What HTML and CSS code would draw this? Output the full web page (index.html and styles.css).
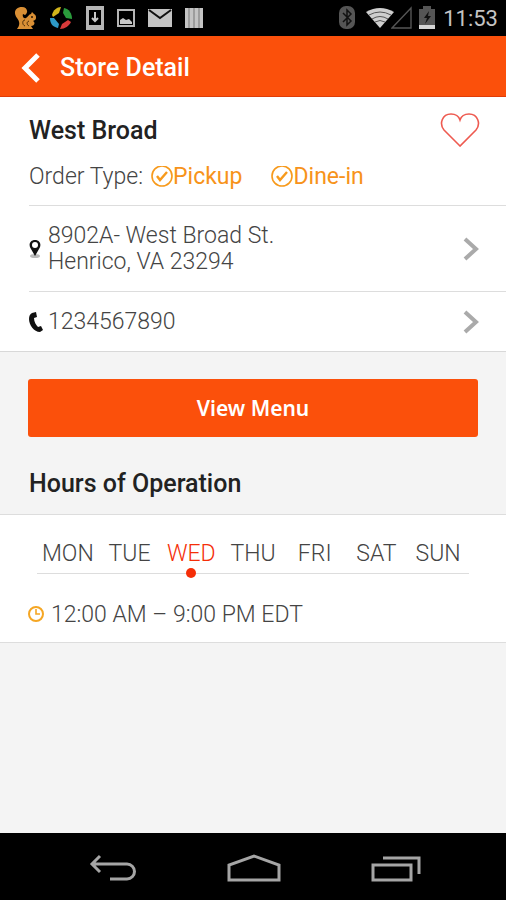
FILE: index.html
```html
<!DOCTYPE html>
<html lang="en">
<head>
    <meta charset="UTF-8">
    <meta name="viewport" content="width=device-width, initial-scale=1.0">
    <title>Store Detail</title>
    <link rel="stylesheet" href="styles.css">
</head>
<body>
    <div class="status-bar">
        <div class="status-left">
            <svg width="22" height="24" viewBox="0 0 22 24">
                <path d="M3 23C6 19 6 16 3 12C-1 7 1 1 8 1C13 1 15 6 11 9L9 8C8 11 10 13 12 12C14 11 15 8 17 8L18 6L20 8C22 9 23 12 21 14L19 15C22 17 20 20 17 20L19 23Z" fill="#d98f35"/>
                <path d="M11 14C8 14 8 19 11 20M15 15C12 16 13 19 15 20" fill="none" stroke="#4a2a08" stroke-width="1"/>
                <circle cx="18" cy="11" r="1" fill="#2a1705"/>
            </svg>
            <svg width="24" height="24" viewBox="0 0 24 24">
                <path d="M3 9C4 4 8 1 12 1L10 7L4 11Z" fill="#d3b51c"/>
                <path d="M15 2C20 3 23 7 23 13L17 12L14 7Z" fill="#2a9c3c"/>
                <path d="M22 16C20 20 16 23 11 23L13 18L19 14Z" fill="#d83a3a"/>
                <path d="M9 22C4 21 1 18 1 12L5 12L10 18Z" fill="#2d9ac8"/>
            </svg>
            <svg width="18" height="24" viewBox="0 0 18 24">
                <path d="M0 0h18v24H0zM3 4v15h12V4z" fill="#b5b5b5" fill-rule="evenodd"/>
                <path d="M9 6v8M6 12l3 3 3-3" fill="none" stroke="#c8c8c8" stroke-width="2"/>
            </svg>
            <svg width="18" height="24" viewBox="0 0 18 24">
                <rect x="1" y="4" width="16" height="16" fill="none" stroke="#b5b5b5" stroke-width="2"/>
                <path d="M3 18v-4l3-2 3 2 3-1 3 3v2z" fill="#c8c8c8"/>
            </svg>
            <svg width="24" height="24" viewBox="0 0 24 24">
                <path d="M0 3h24v18H0z" fill="#c4c4c4"/>
                <path d="M1 4l11 8 11-8" fill="none" stroke="#111" stroke-width="2"/>
            </svg>
            <svg width="18" height="24" viewBox="0 0 18 24">
                <path d="M0 2h18v20H0z" fill="#c4c4c4"/>
                <path d="M4 2v20M9 2v20M14 2v20" stroke="#777" stroke-width="1"/>
            </svg>
        </div>
        <div class="status-right">
            <svg width="16" height="24" viewBox="0 0 16 24">
                <rect width="16" height="23" rx="7" fill="#555"/>
                <path d="M4 7l8 8-4 4V4l4 4-8 8" fill="none" stroke="#111" stroke-width="1.5"/>
            </svg>
            <svg class="icon-wifi" width="28" height="24" viewBox="0 0 28 24">
                <path d="M0 6Q14-2 28 6L14 22Z" fill="#cfcfcf"/>
                <path d="M3 9Q14 3 25 9M6 13Q14 8 22 13M9 16Q14 13 19 16" fill="none" stroke="#555" stroke-width="1"/>
            </svg>
            <svg class="icon-signal" width="21" height="24" viewBox="0 0 21 24">
                <path d="M1 22L20 2v20z" fill="none" stroke="#555" stroke-width="1.4"/>
            </svg>
            <svg width="16" height="24" viewBox="0 0 16 24">
                <path d="M0 3h4V0h8v3h4v20H0z" fill="#555"/>
                <path d="M0 19h16v4H0z" fill="#d5d5d5"/>
                <path d="M10 5l-5 7h3l-2 6 6-8H9z" fill="#111"/>
            </svg>
            <span class="clock">11:53</span>
        </div>
    </div>

    <header class="header">
        <button class="back" aria-label="Back">
            <svg width="20" height="32" viewBox="0 0 20 32">
                <path d="M17 3L4 16l13 13" fill="none" stroke="#fff" stroke-width="5"/>
            </svg>
        </button>
        <h1>Store Detail</h1>
    </header>

    <main class="content">
        <section class="store">
            <div class="summary">
                <div>
                    <h2>West Broad</h2>
                    <div class="order-type">
                        <span>Order Type:</span>
                        <span class="type">
                            <svg width="22" height="22" viewBox="0 0 22 22">
                                <circle cx="11" cy="10" r="10" fill="none" stroke="#f79a1c" stroke-width="1.6"/>
                                <path d="M6 10l3 4 7-8" fill="none" stroke="#f79a1c" stroke-width="2.4"/>
                            </svg>Pickup
                        </span>
                        <span class="type">
                            <svg width="22" height="22" viewBox="0 0 22 22">
                                <circle cx="11" cy="10" r="10" fill="none" stroke="#f79a1c" stroke-width="1.6"/>
                                <path d="M6 10l3 4 7-8" fill="none" stroke="#f79a1c" stroke-width="2.4"/>
                            </svg>Dine-in
                        </span>
                    </div>
                </div>
                <button class="favorite" aria-label="Add to favorites">
                    <svg width="40" height="36" viewBox="0 0 40 36">
                        <path d="M20 34L4 18C-1 12 2 2 11 2C16 2 19 5 20 8C21 5 24 2 29 2C38 2 41 12 36 18Z" fill="none" stroke="#ee5a50" stroke-width="1.6"/>
                    </svg>
                </button>
            </div>

            <a class="row" href="#address">
                <svg width="14" height="20" viewBox="0 0 14 20">
                    <ellipse cx="6" cy="17" rx="5" ry="2" fill="#bbb"/>
                    <path d="M6 17L2 10C-1 6 1 1 6 1S13 6 10 10Z" fill="#111"/>
                    <circle cx="6" cy="6" r="3" fill="#fff"/>
                </svg>
                <span class="row-text">8902A- West Broad St.<br>Henrico, VA 23294</span>
                <svg class="chevron" width="16" height="24" viewBox="0 0 16 24">
                    <path d="M2 2l11 10L2 22" fill="none" stroke="#aaa" stroke-width="4"/>
                </svg>
            </a>

            <a class="row" href="tel:1234567890">
                <svg width="14" height="20" viewBox="0 0 14 20">
                    <path d="M3 1L7 0L8 5L5 6C5 10 7 13 9 15L12 14L14 18L11 20C5 20 0 13 0 7C0 4 1 2 3 1Z" fill="#111"/>
                </svg>
                <span class="row-text">1234567890</span>
                <svg class="chevron" width="16" height="24" viewBox="0 0 16 24">
                    <path d="M2 2l11 10L2 22" fill="none" stroke="#aaa" stroke-width="4"/>
                </svg>
            </a>
        </section>

        <button class="view-menu">View Menu</button>

        <h2 class="hours-title">Hours of Operation</h2>

        <section class="hours">
            <div class="days">
                <button>MON</button>
                <button>TUE</button>
                <button class="active">WED</button>
                <button>THU</button>
                <button>FRI</button>
                <button>SAT</button>
                <button>SUN</button>
            </div>
            <div class="time">
                <svg width="18" height="18" viewBox="0 0 18 18">
                    <circle cx="8" cy="8" r="7" fill="none" stroke="#f5a623" stroke-width="2"/>
                    <path d="M8 3v5h4" fill="none" stroke="#f5a623" stroke-width="1.6"/>
                </svg>
                <span>12:00 AM – 9:00 PM EDT</span>
            </div>
        </section>
    </main>

    <nav class="nav-bar">
        <button aria-label="Back">
            <svg width="48" height="28" viewBox="0 0 48 28">
                <path d="M11 2L3 10l8 8M3 10h35a7 7 0 0 1 0 15H21" fill="none" stroke="#a5a5a5" stroke-width="3"/>
            </svg>
        </button>
        <button aria-label="Home">
            <svg width="54" height="28" viewBox="0 0 54 28">
                <path d="M2 26V11L27 2l25 9v15z" fill="none" stroke="#a5a5a5" stroke-width="3"/>
            </svg>
        </button>
        <button aria-label="Recent apps">
            <svg width="50" height="28" viewBox="0 0 50 28">
                <path d="M2 11h38v15H2zM12 4h36v16" fill="none" stroke="#a5a5a5" stroke-width="3"/>
            </svg>
        </button>
    </nav>
</body>
</html>
```
FILE: styles.css
```css
* {
    box-sizing: border-box;
}

body {
    font-family: Roboto, 'Liberation Sans', sans-serif;
    font-size: 23px;
    font-weight: 300;
    line-height: 26px;
    color: #444;
    background-color: #f4f4f4;
    margin: 0;
    display: flex;
    flex-direction: column;
    min-height: 100vh;
}

svg {
    display: block;
    flex-shrink: 0;
}

button {
    font: inherit;
    color: inherit;
    background: none;
    border: none;
    padding: 0;
    cursor: pointer;
}

h1, h2 {
    margin: 0;
    font-size: 25px;
    font-weight: 500;
}

h2 {
    color: #222;
}

/* Status bar */
.status-bar {
    display: flex;
    justify-content: space-between;
    align-items: center;
    height: 36px;
    padding: 0 8px 0 14px;
    background-color: #000;
}

.status-left, .status-right {
    display: flex;
    align-items: center;
}

.status-left {
    gap: 13px;
}

.icon-wifi {
    margin-left: 11px;
}

.icon-signal {
    margin-left: -3px;
    margin-right: 7px;
}

.clock {
    margin-left: 8px;
    padding-top: 2px;
    font-size: 22px;
    font-weight: 400;
    color: #c4c4c4;
}

/* Header */
.header {
    display: flex;
    align-items: center;
    gap: 19px;
    height: 61px;
    padding: 3px 21px 0;
    background-color: #fb500b;
    border-bottom: 1px solid #e03c08;
    color: #fff;
}

/* Store info */
.content {
    flex: 1;
}

.store {
    padding-left: 29px;
    background-color: #fff;
    border-bottom: 1px solid #d8d8d8;
}

.summary {
    display: flex;
    justify-content: space-between;
    align-items: flex-start;
    padding: 21px 26px 15px 0;
}

.order-type {
    display: flex;
    align-items: center;
    margin-top: 20px;
}

.type {
    display: flex;
    align-items: center;
    margin-right: 29px;
    color: #f7931a;
    font-weight: 400;
}

.order-type span:first-child {
    margin-right: 8px;
}

.favorite {
    margin-top: -6px;
}

.row {
    display: flex;
    align-items: center;
    gap: 5px;
    padding: 17px 27px 16px 0;
    border-top: 1px solid #ddd;
    color: inherit;
    text-decoration: none;
}

.row-text {
    flex: 1;
}

.view-menu {
    display: block;
    width: calc(100% - 56px);
    height: 58px;
    margin: 27px auto 34px;
    border-radius: 3px;
    background-color: #fb500b;
    color: #fff;
    font-family: 'Noto Sans', sans-serif;
    font-size: 21px;
    font-weight: 600;
}

/* Hours */
.hours-title {
    padding: 0 29px;
}

.hours {
    margin-top: 17px;
    padding: 26px 28px 14px;
    background-color: #fff;
    border-top: 1px solid #ddd;
    border-bottom: 1px solid #ddd;
}

.days {
    display: grid;
    grid-template-columns: repeat(7, 1fr);
    margin: 0 9px;
    border-bottom: 1px solid #ddd;
}

.days button {
    position: relative;
    padding-bottom: 6px;
}

.days .active {
    color: #f52e08;
}

.days .active::after {
    content: "";
    position: absolute;
    left: 50%;
    bottom: -5px;
    width: 10px;
    height: 10px;
    margin-left: -5px;
    border-radius: 50%;
    background-color: #f52e08;
}

.time {
    display: flex;
    align-items: center;
    gap: 5px;
    margin-top: 28px;
}

/* Navigation bar */
.nav-bar {
    display: flex;
    justify-content: space-between;
    align-items: center;
    height: 67px;
    padding: 3px 85px 0 89px;
    background-color: #000;
}
```
